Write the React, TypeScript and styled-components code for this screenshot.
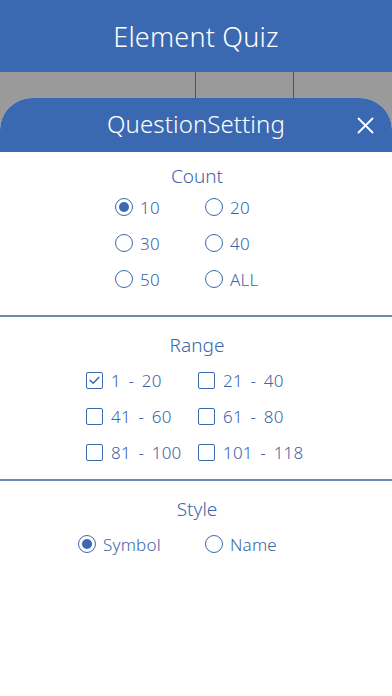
import React from "react";
import styled, { createGlobalStyle } from "styled-components";

const BLUE = "#3b69b1";
const TEXT = "#3a66a8";

const Global = createGlobalStyle`
  html, body { margin: 0; padding: 0; background: #ffffff; }
  body { font-family: "Noto Sans", "DejaVu Sans", sans-serif; }
  #root { width: 392px; height: 696px; overflow: hidden; }
`;

const Page = styled.div`
  width: 392px;
  height: 696px;
  display: flex;
  flex-direction: column;
  background: #9a9a9a;
`;

const AppBar = styled.header`
  height: 72px;
  flex: 0 0 72px;
  background: ${BLUE};
  display: flex;
  align-items: center;
  justify-content: center;
  color: #ffffff;
  font-size: 27px;
  font-weight: 350;
  box-sizing: border-box;
  letter-spacing: 0.2px;
`;

const TabStrip = styled.div`
  height: 26px;
  flex: 0 0 26px;
  display: grid;
  grid-template-columns: 195px 98px 1fr;
`;

const TabCell = styled.div<{ $divider?: boolean }>`
  border-left: ${(p) => (p.$divider ? "1px solid #4a5668" : "none")};
`;

const Sheet = styled.section`
  flex: 1;
  display: flex;
  flex-direction: column;
  background: #ffffff;
  border-radius: 32px 32px 0 0;
  overflow: hidden;
`;

const SheetHeader = styled.div`
  height: 54px;
  flex: 0 0 54px;
  background: ${BLUE};
  display: grid;
  grid-template-columns: 1fr auto 1fr;
  align-items: center;
  color: #ffffff;
`;

const SheetTitle = styled.h2`
  grid-column: 2;
  margin: 0;
  font-weight: 350;
  font-size: 24px;
  line-height: 30px;
  padding-bottom: 2px;
  letter-spacing: 0.1px;
`;

const CloseButton = styled.button`
  grid-column: 3;
  justify-self: end;
  margin-right: 18px;
  width: 18px;
  height: 18px;
  padding: 0;
  border: none;
  background: transparent;
  display: flex;
  align-items: center;
  justify-content: center;
`;

const Section = styled.div<{ $pt: number; $gap: number; $pb: number; $sep?: boolean }>`
  padding-top: ${(p) => p.$pt}px;
  padding-bottom: ${(p) => p.$pb}px;
  display: flex;
  flex-direction: column;
  gap: ${(p) => p.$gap}px;
  border-bottom: ${(p) => (p.$sep ? "2px solid #6a89b3" : "none")};
`;

const SectionTitle = styled.div`
  text-align: center;
  color: ${TEXT};
  font-size: 19px;
  font-weight: 350;
  line-height: 24px;
  padding-left: 2px;
`;

const OptionGrid = styled.div<{ $start: number; $col: number }>`
  display: grid;
  grid-template-columns: ${(p) => p.$col}px auto;
  grid-auto-rows: 36px;
  padding-left: ${(p) => p.$start}px;
`;

const Option = styled.label`
  display: flex;
  align-items: center;
  gap: 7px;
  color: ${TEXT};
  font-size: 17px;
  font-weight: 350;
  word-spacing: 3px;
  letter-spacing: 0.2px;
  white-space: nowrap;
`;

const Radio = styled.span<{ $on?: boolean }>`
  width: 18px;
  height: 18px;
  box-sizing: border-box;
  border-radius: 50%;
  border: 1.5px solid ${BLUE};
  display: flex;
  align-items: center;
  justify-content: center;
  flex: 0 0 18px;
  &::after {
    content: "";
    width: 10px;
    height: 10px;
    border-radius: 50%;
    background: ${(p) => (p.$on ? BLUE : "transparent")};
  }
`;

const Check = styled.span`
  width: 17px;
  height: 17px;
  box-sizing: border-box;
  border: 1.5px solid ${BLUE};
  border-radius: 2px;
  display: flex;
  align-items: center;
  justify-content: center;
  flex: 0 0 17px;
  margin-right: 1px;
`;

const CheckMark = () => (
  <svg width="11" height="9" viewBox="0 0 11 9" fill="none">
    <path d="M1.2 4.4 L4.2 7.2 L9.8 1.4" stroke={BLUE} strokeWidth="1.5" strokeLinecap="round" strokeLinejoin="round" />
  </svg>
);

const CloseIcon = () => (
  <svg width="17" height="17" viewBox="0 0 17 17" fill="none">
    <path d="M1.5 1.5 L15.5 15.5 M15.5 1.5 L1.5 15.5" stroke="#ffffff" strokeWidth="1.8" strokeLinecap="round" />
  </svg>
);

const counts = ["10", "20", "30", "40", "50", "ALL"];
const ranges = ["1 - 20", "21 - 40", "41 - 60", "61 - 80", "81 - 100", "101 - 118"];
const styles = ["Symbol", "Name"];

export default function App() {
  return (
    <>
      <Global />
      <Page>
        <AppBar>Element Quiz</AppBar>
        <TabStrip>
          <TabCell />
          <TabCell $divider />
          <TabCell $divider />
        </TabStrip>
        <Sheet>
          <SheetHeader>
            <SheetTitle>QuestionSetting</SheetTitle>
            <CloseButton aria-label="close">
              <CloseIcon />
            </CloseButton>
          </SheetHeader>

          <Section $pt={12} $gap={1} $pb={18} $sep>
            <SectionTitle>Count</SectionTitle>
            <OptionGrid $start={115} $col={90}>
              {counts.map((c, i) => (
                <Option key={c}>
                  <Radio $on={i === 0} />
                  {c}
                </Option>
              ))}
            </OptionGrid>
          </Section>

          <Section $pt={16} $gap={5} $pb={9} $sep>
            <SectionTitle>Range</SectionTitle>
            <OptionGrid $start={86} $col={112}>
              {ranges.map((r, i) => (
                <Option key={r}>
                  <Check>{i === 0 && <CheckMark />}</Check>
                  {r}
                </Option>
              ))}
            </OptionGrid>
          </Section>

          <Section $pt={16} $gap={5} $pb={0}>
            <SectionTitle>Style</SectionTitle>
            <OptionGrid $start={78} $col={127}>
              {styles.map((s, i) => (
                <Option key={s}>
                  <Radio $on={i === 0} />
                  {s}
                </Option>
              ))}
            </OptionGrid>
          </Section>
        </Sheet>
      </Page>
    </>
  );
}
